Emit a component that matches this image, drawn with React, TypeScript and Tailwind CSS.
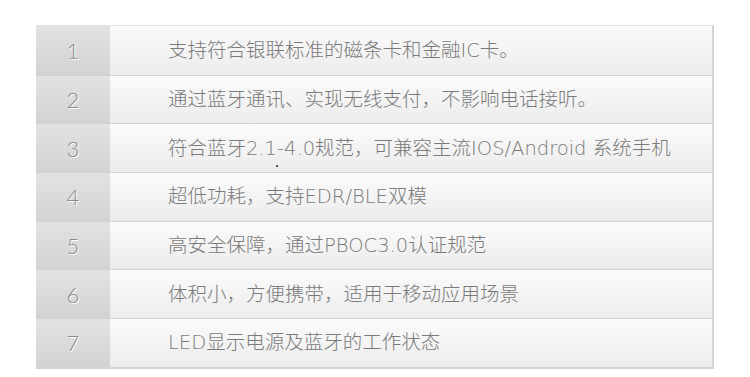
const features = [
  "支持符合银联标准的磁条卡和金融IC卡。",
  "通过蓝牙通讯、实现无线支付，不影响电话接听。",
  "符合蓝牙2.1-4.0规范，可兼容主流IOS/Android 系统手机",
  "超低功耗，支持EDR/BLE双模",
  "高安全保障，通过PBOC3.0认证规范",
  "体积小，方便携带，适用于移动应用场景",
  "LED显示电源及蓝牙的工作状态",
];

export default function App() {
  return (
    <div className="h-[377px] w-[750px] bg-white pt-[25px] pl-[36px]">
      <div className="w-[678px] border-r-2 border-b-2 border-[#d4d4d4] border-t border-t-[#e2e2e2]">
        {features.map((text, i) => (
          <div
            key={i}
            className="flex h-[48.7px] border-t border-[#d2d2d2] shadow-[inset_0_1px_0_#ffffff] first:border-t-0"
          >
            <div className="flex w-[74px] shrink-0 items-center justify-center bg-gradient-to-b from-[#e2e2e2] to-[#d3d3d3] font-['Lato',sans-serif] text-[22px] font-light text-[#8c8c8c] [text-shadow:1px_1px_0_#ffffff]">
              {i + 1}
            </div>
            <div className="relative flex flex-1 items-center bg-gradient-to-b from-[#fbfbfb] to-[#ececec] pl-[58px] font-['DejaVu_Sans','Noto_Sans_CJK_SC',sans-serif] text-[19.5px] font-extralight text-[#7a7a7a]">
              {text}
              {i === 2 && (
                <span className="absolute left-[166px] top-[41px] h-[2px] w-[2px] bg-[#555]" />
              )}
            </div>
          </div>
        ))}
      </div>
    </div>
  );
}
